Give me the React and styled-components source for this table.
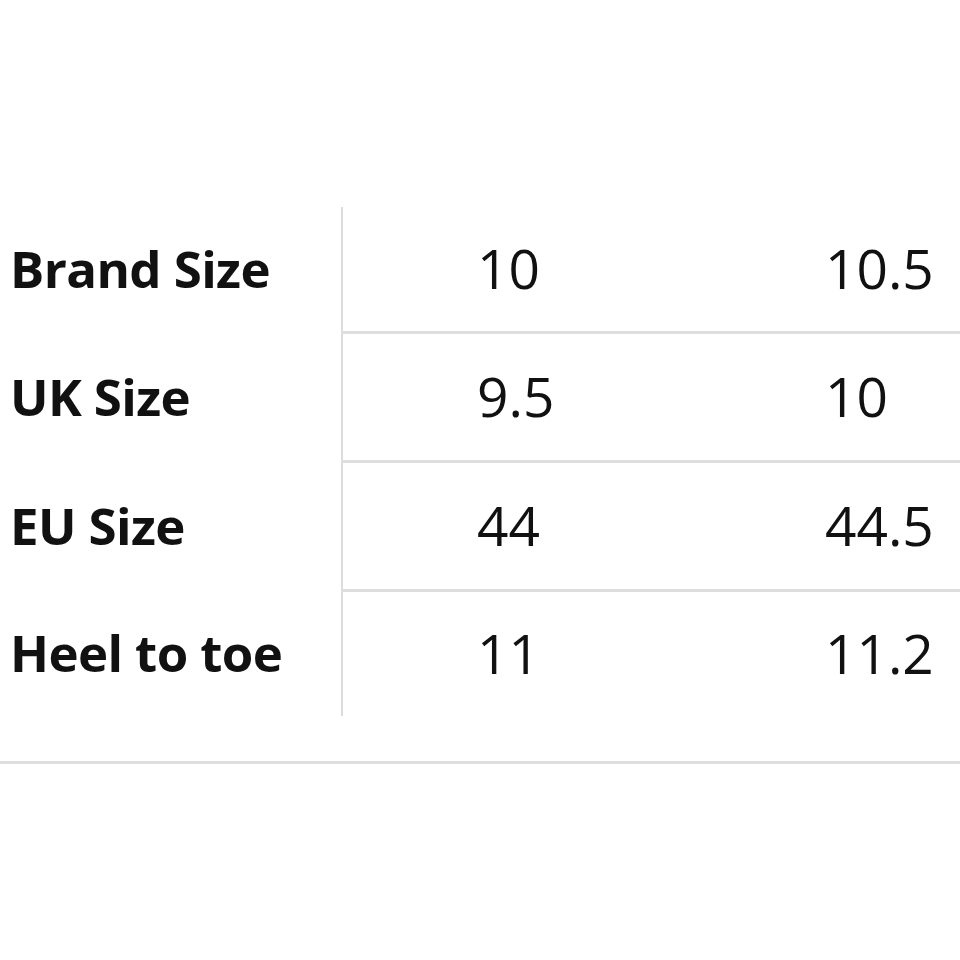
import React from "react";
import styled, { createGlobalStyle } from "styled-components";

const Global = createGlobalStyle`
  html, body { margin: 0; padding: 0; background: #fff; }
  body { font-family: "Open Sans", "Noto Sans", sans-serif; color: #111; }
`;

const Page = styled.div`
  width: 960px;
  height: 960px;
  padding-top: 207px;
  box-sizing: border-box;
  overflow: hidden;
`;

const Table = styled.div`
  display: flex;
  flex-direction: column;
`;

const Row = styled.div`
  display: grid;
  grid-template-columns: 341px 1fr;
  height: ${p => p.h}px;
`;

const Label = styled.div`
  display: flex;
  align-items: center;
  padding: 0 0 5px 10px;
  font-size: 51px;
  font-weight: 700;
  letter-spacing: -0.6px;
`;

const Values = styled.div`
  display: grid;
  grid-template-columns: 134px 348px 1fr;
  border-left: 2px solid #dcdcdc;
  border-bottom: ${p => (p.last ? "none" : "3px solid #dedede")};
`;

const Value = styled.div`
  display: flex;
  align-items: center;
  padding-bottom: 4px;
  grid-column: ${p => p.col};
  font-size: 55px;
  font-weight: 400;
`;

const Rule = styled.div`
  margin-top: 45px;
  height: 3px;
  background: #dedede;
`;

const rows = [
  { label: "Brand Size", a: "10", b: "10.5", h: 127 },
  { label: "UK Size", a: "9.5", b: "10", h: 129 },
  { label: "EU Size", a: "44", b: "44.5", h: 129 },
  { label: "Heel to toe", a: "11", b: "11.2", h: 124 },
];

export default function App() {
  return (
    <Page>
      <Global />
      <Table>
        {rows.map((r, i) => (
          <Row key={r.label} h={r.h}>
            <Label>{r.label}</Label>
            <Values last={i === rows.length - 1}>
              <Value col={2}>{r.a}</Value>
              <Value col={3}>{r.b}</Value>
            </Values>
          </Row>
        ))}
      </Table>
      <Rule />
    </Page>
  );
}
